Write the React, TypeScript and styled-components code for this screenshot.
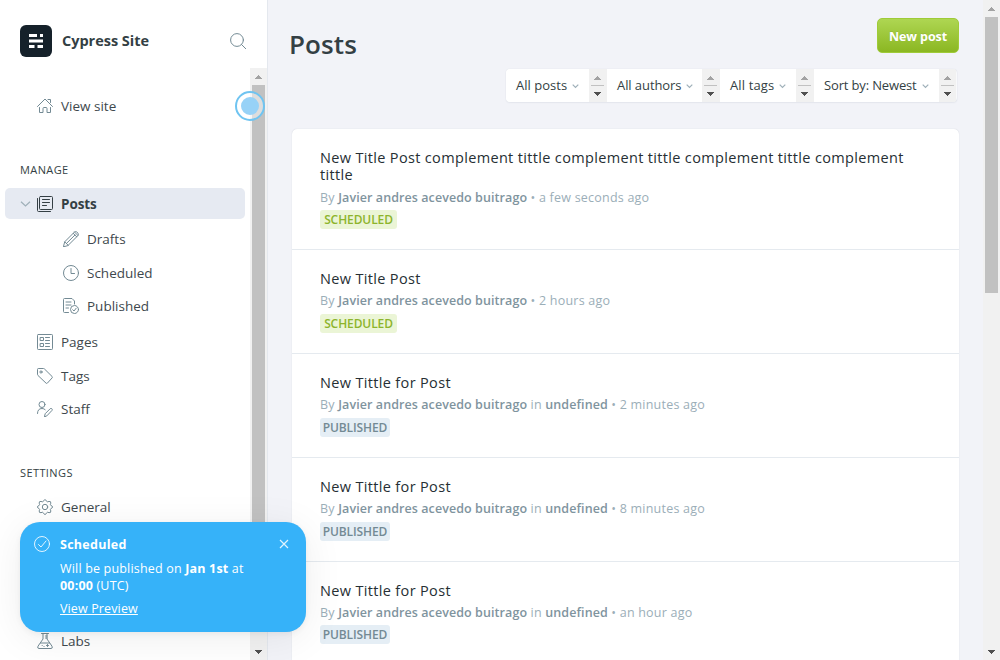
import React from "react";
import styled, { createGlobalStyle, css } from "styled-components";

const GlobalStyle = createGlobalStyle`
  * { box-sizing: border-box; }
  html, body { margin: 0; padding: 0; height: 100%; overflow: hidden; }
  body {
    font-family: "Open Sans", "Noto Sans", sans-serif;
    color: #343f44;
    background: #f2f3f8;
  }
`;

const Page = styled.div`
  display: flex;
  width: 1000px;
  height: 660px;
  overflow: hidden;
  position: relative;
`;

/* ---------- scrollbars ---------- */

const Track = styled.div`
  flex: none;
  display: flex;
  flex-direction: column;
  width: 17px;
  height: 100%;
  background: #f1f1f1;
`;
const ArrowBox = styled.div<{ $h?: number }>`
  flex: none;
  display: flex;
  justify-content: center;
  align-items: center;
  height: ${(p) => p.$h ?? 17}px;
`;
const ThumbLane = styled.div`
  flex: 1;
  padding: 0 2px;
`;
const Thumb = styled.div<{ $h: string }>`
  height: ${(p) => p.$h};
  background: #c1c1c1;
`;

const Arrow = ({ down, color }: { down?: boolean; color: string }) => (
  <svg width="7" height="4" viewBox="0 0 7 4" shapeRendering="crispEdges" fill={color}>
    <path d={down ? "M0 0h7v1h-1v1h-1v1h-1v1h-1v-1h-1v-1h-1v-1h-1z" : "M3 0h1v1h1v1h1v1h1v1h-7v-1h1v-1h1v-1h1z"} />
  </svg>
);

const Scrollbar = ({ thumb }: { thumb: string }) => (
  <Track>
    <ArrowBox><Arrow color="#a3a3a3" /></ArrowBox>
    <ThumbLane><Thumb $h={thumb} /></ThumbLane>
    <ArrowBox><Arrow down color="#505050" /></ArrowBox>
  </Track>
);

/* ---------- sidebar ---------- */

const Sidebar = styled.aside`
  flex: none;
  display: flex;
  flex-direction: column;
  width: 268px;
  background: #fff;
  border-right: 1px solid #e4e8ee;
`;
const SiteHeader = styled.header`
  flex: none;
  display: flex;
  align-items: center;
  height: 68px;
  padding: 14px 21px 0 20px;
`;
const Logo = styled.div`
  display: flex;
  align-items: center;
  justify-content: center;
  width: 32px;
  height: 32px;
  border-radius: 6px;
  background: #15212a;
`;
const SiteName = styled.div`
  flex: 1;
  margin-left: 10px;
  font-size: 14.5px;
  font-weight: 700;
  line-height: 20px;
  letter-spacing: -0.02px;
`;
const SidebarBody = styled.div`
  flex: 1;
  display: flex;
  min-height: 0;
`;
const Nav = styled.nav`
  flex: 1;
  padding: 22px 5px 0;
  overflow: hidden;
`;
const Group = styled.div<{ $gap: number }>`
  display: flex;
  flex-direction: column;
  margin-top: ${(p) => p.$gap}px;
`;
const GroupLabel = styled.div`
  height: 16px;
  margin-bottom: 10px;
  padding-left: 15px;
  font-size: 11px;
  line-height: 16px;
  letter-spacing: 0.4px;
`;
const NavItem = styled.a<{ $active?: boolean; $nested?: boolean; $h: number; $top?: number }>`
  position: relative;
  display: flex;
  align-items: center;
  height: ${(p) => p.$h}px;
  margin-top: ${(p) => p.$top ?? 0}px;
  padding-left: ${(p) => (p.$nested ? 58 : 32)}px;
  font-size: 13.5px;
  letter-spacing: 0;
  border-radius: 5px;
  color: #3e484d;
  svg { flex: none; margin-right: 8px; }
  ${(p) =>
    p.$active &&
    css`
      padding-left: 15px;
      background: #e6eaf2;
      color: #343f44;
      font-weight: 700;
      letter-spacing: -0.1px;
    `}
`;

const line = { fill: "none", stroke: "#738a94", strokeWidth: 1, strokeLinecap: "round", strokeLinejoin: "round" } as const;
const Icon = ({ children, color = "#738a94", size = 16 }: { children: React.ReactNode; color?: string; size?: number }) => (
  <svg width={size} height={size} viewBox="0 0 16 16" {...line} stroke={color}>{children}</svg>
);

const HomeIcon = () => (
  <Icon>
    <path d="M.5 8.500 8 1l7.500 7.500M2.500 9.500v5h3.500v-4q0-1 1-1h2q1 0 1 1v4h3.500v-5M11 1.500h2.500v3" />
  </Icon>
);
const PostsIcon = () => (
  <Icon color="#343f44">
    <rect x="2.500" y=".5" width="13" height="13" rx="1" />
    <path d="M.5 2.500v12q0 1 1 1h12M5.500 3.500h7M5.500 6.500h7M5.500 9.500h4" />
  </Icon>
);
const PencilIcon = () => (
  <Icon>
    <path d="M.5 15.500l1.200-4.700L11.500 1q1.200-1 2.300 0l1.200 1.200q1 1.100 0 2.300L5.200 14.300zM1.700 10.800l3.500 3.500M10.200 2.300l3.500 3.500M11.500 1l3.500 3.500M3.400 12.500l8.500-8.400" />
  </Icon>
);
const ClockIcon = () => (
  <Icon>
    <circle cx="8" cy="8" r="7.500" />
    <path d="M8 3.500v5h3.500" />
  </Icon>
);
const PublishedIcon = () => (
  <Icon>
    <path d="M5.500 14.500h-4q-1 0-1-1v-12q0-1 1-1h7.500l2.500 2.500v3M3 4h5M3 7h5M3 10h2.500" />
    <circle cx="11.500" cy="11.500" r="4" />
    <path d="M9.700 11.700l1.300 1.300 2.200-2.800" />
  </Icon>
);
const PagesIcon = () => (
  <Icon>
    <rect x=".5" y=".5" width="15" height="15" rx=".8" />
    <path d="M3.500 3.500h3v3h-3zM3.500 9.500h3v3h-3zM8.500 3.500h4M8.500 6.500h4M8.500 9.500h4M8.500 12.500h4" />
  </Icon>
);
const TagIcon = () => (
  <Icon>
    <path d="M.5 1.200q0-.7.7-.7h5.300q.5 0 .9.400l7.700 7.600q.7.700 0 1.400l-4.700 5.200q-.7.700-1.400 0L.9 7.400q-.4-.4-.4-.9z" />
    <circle cx="4" cy="4" r="1.100" />
  </Icon>
);
const StaffIcon = () => (
  <Icon>
    <circle cx="5" cy="3.500" r="3" />
    <path d="M.5 12.500q0-5 4.500-5 2 0 3.200 1.200M7.500 15.500l.7-2.800 5-5q.8-.6 1.600 0 .9.900.2 1.700l-4.900 5.200z" />
  </Icon>
);
const GearIcon = () => (
  <Icon>
    <circle cx="8" cy="8" r="2.700" />
    <path d="M6.700 1.500q1.300-1.900 2.600 0l.5 1q.4.500 1.100.3l1.100-.4q2.100-.3 1.800 1.800l-.4 1q-.2.800.4 1.200l1 .4q1.600 1.200 0 2.400l-1 .5q-.6.400-.4 1.100l.4 1.100q.3 2.100-1.800 1.800l-1.100-.4q-.7-.2-1.100.4l-.5.900q-1.300 1.900-2.600 0l-.5-.9q-.4-.6-1.100-.4l-1.100.4q-2.100.3-1.800-1.800l.4-1.100q.2-.7-.4-1.100l-1-.5q-1.600-1.200 0-2.400l1-.4q.6-.4.4-1.200l-.4-1q-.3-2.100 1.800-1.800l1.100.4q.7.200 1.100-.3z" />
  </Icon>
);
const LabsIcon = () => (
  <Icon>
    <path d="M4.500.5h7M6 .5v5.500L1 13.200q-1 2.300 1 2.300h12q2 0 1-2.300L10 6V.5M3.500 10h9M10 3H8.500M10 5H8.500M10.500 11.500v2M9.500 12.500h2M5.200 12.500v.1M7 13.500v.1" />
  </Icon>
);
const SearchIcon = () => (
  <Icon>
    <circle cx="7" cy="7" r="6.400" />
    <path d="M11.500 11.500l4.200 4.200" />
  </Icon>
);
const Chevron = styled.svg`
  && { margin: 0 6px 0 0; }
`;

/* ---------- main ---------- */

const Main = styled.main`
  flex: 1;
  min-width: 0;
  padding: 18px 24px 0;
  overflow: hidden;
`;
const TitleBar = styled.div`
  display: flex;
  justify-content: space-between;
  height: 51px;
  margin-left: -3px;
`;
const Heading = styled.h1`
  margin: 8px 0 0;
  font-size: 26px;
  line-height: 36px;
  font-weight: 600;
  letter-spacing: 0.1px;
`;
const NewPost = styled.button`
  width: 82px;
  height: 35px;
  padding: 2px 0 0;
  border: 1px solid #9fcb38;
  border-radius: 5px;
  background: linear-gradient(#aed652, #8bb722);
  color: #fff;
  font: 700 12.5px/31px "Open Sans", sans-serif;
  letter-spacing: -0.1px;
  text-shadow: 0 -1px 0 rgba(0, 0, 0, 0.08);
`;
const Filters = styled.div`
  display: flex;
  width: 451px;
  height: 33px;
  margin-left: auto;
  margin-right: 2px;
  border-radius: 4px;
  background: #f8f9fb;
  box-shadow: 0 0 1px rgba(60, 80, 100, 0.2), 0 1px 2px rgba(60, 80, 100, 0.06);
  overflow: hidden;
`;
const Filter = styled.div<{ $w: number; $ls: number }>`
  flex: none;
  display: flex;
  align-items: center;
  width: ${(p) => p.$w}px;
  padding: 0 0 2px 10px;
  background: #fff;
  font-size: 13px;
  letter-spacing: ${(p) => p.$ls}px;
  white-space: nowrap;
  color: #343f44;
  svg { flex: none; margin: 3px 0 0 5px; }
`;
const Stepper = styled.div<{ $w: number }>`
  flex: none;
  display: flex;
  flex-direction: column;
  justify-content: center;
  width: ${(p) => p.$w}px;
  padding: 0 ${(p) => p.$w - 15}px 0 2px;
  background: #f1f1f1;
`;
const StepLine = styled.div`
  height: 1px;
  background: #c1c1c1;
`;
const List = styled.ol`
  width: 667px;
  margin: 27px 0 0;
  padding: 0;
  list-style: none;
  background: #fff;
  border-radius: 5px 5px 0 0;
  box-shadow: 0 0 1px rgba(60, 80, 100, 0.25);
`;
const Row = styled.li<{ $h: number }>`
  height: ${(p) => p.$h}px;
  padding: 20px 28px 0;
  border-bottom: 1px solid #e5eaef;
`;
const PostTitle = styled.h3`
  margin: 0;
  padding-right: 20px;
  font-size: 14.5px;
  line-height: 17px;
  font-weight: 500;
  letter-spacing: 0.34px;
  color: #262f34;
`;
const Meta = styled.p<{ $lead: number; $tail: number }>`
  margin: ${(p) => p.$lead}px 0 ${(p) => p.$tail}px;
  font-size: 12.5px;
  line-height: 18px;
  letter-spacing: 0.22px;
  color: #9baeb8;
  b { font-weight: 600; letter-spacing: 0.08px; color: #7f949e; }
`;
const Badge = styled.span<{ $scheduled: boolean }>`
  display: block;
  width: ${(p) => (p.$scheduled ? 77 : 70)}px;
  height: 19px;
  border-radius: 3px;
  text-align: center;
  font-size: 12px;
  line-height: 19px;
  font-weight: 600;
  letter-spacing: -0.1px;
  color: ${(p) => (p.$scheduled ? "#8db42c" : "#738a94")};
  background: ${(p) => (p.$scheduled ? "#ebf5d6" : "#e5eef5")};
`;

/* ---------- overlays ---------- */

const Toast = styled.div`
  position: absolute;
  left: 20px;
  top: 522px;
  display: flex;
  width: 286px;
  height: 110px;
  padding: 14px 17px 0 14px;
  border-radius: 20px;
  background: #36b2f9;
  color: #fff;
  font-size: 12.5px;
  line-height: 17px;
  letter-spacing: 0.18px;
  box-shadow: 0 0 1px rgba(0, 0, 0, 0.06), 0 2px 6px rgba(0, 0, 0, 0.05), 0 6px 40px rgba(0, 0, 0, 0.07);
  svg { flex: none; }
`;
const ToastText = styled.div`
  flex: 1;
  margin-left: 10px;
`;
const ToastTitle = styled.div`
  font-weight: 700;
  letter-spacing: 0.28px;
`;
const ToastBody = styled.div`
  margin: 7px 0 6px;
  white-space: nowrap;
`;
const ToastLink = styled.a`
  text-decoration: underline;
  letter-spacing: 0.13px;
`;
const Pulse = styled.div`
  position: absolute;
  left: 235px;
  top: 91px;
  display: flex;
  align-items: center;
  justify-content: center;
  width: 30px;
  height: 30px;
  border: 2px solid #6fc4f1;
  border-radius: 50%;
  background: rgba(255, 255, 255, 0.45);
`;
const PulseDot = styled.div`
  width: 18px;
  height: 18px;
  border-radius: 50%;
  background: #97d2f7;
`;

const filters = [
  { label: "All posts", w: 83, s: 18, ls: 0.02 },
  { label: "All authors", w: 95, s: 18, ls: -0.08 },
  { label: "All tags", w: 76, s: 18, ls: 0.12 },
  { label: "Sort by: Newest", w: 125, s: 17, ls: -0.15 },
];

const posts = [
  { title: "New Title Post complement tittle complement tittle complement tittle complement tittle", time: "a few seconds ago", scheduled: true, h: 121, lead: 6, tail: 3 },
  { title: "New Title Post", time: "2 hours ago", scheduled: true, h: 104, lead: 5, tail: 4 },
  { title: "New Tittle for Post", time: "2 minutes ago", scheduled: false, h: 104, lead: 5, tail: 4 },
  { title: "New Tittle for Post", time: "8 minutes ago", scheduled: false, h: 104, lead: 5, tail: 4 },
  { title: "New Tittle for Post", time: "an hour ago", scheduled: false, h: 104, lead: 5, tail: 3 },
];

export default function App() {
  return (
    <>
      <GlobalStyle />
      <Page>
        <Sidebar>
          <SiteHeader>
            <Logo>
              <svg width="14" height="14" viewBox="0 0 14 14" fill="#fff">
                <path d="M0 0h8v3H0zM11 0h3v3h-3zM0 5.500h14v3H0zM0 11h5.500v3H0zM8.500 11H14v3H8.500z" />
              </svg>
            </Logo>
            <SiteName>Cypress Site</SiteName>
            <SearchIcon />
          </SiteHeader>
          <SidebarBody>
            <Nav>
              <NavItem $h={31}><HomeIcon />View site</NavItem>
              <Group $gap={41}>
                <GroupLabel>MANAGE</GroupLabel>
                <NavItem $active $h={31}>
                  <Chevron width="11" height="6" viewBox="0 0 11 6" fill="none" stroke="#9fb0b9" strokeWidth="1.2">
                    <path d="M1 .7l4.500 4.300L10 .7" />
                  </Chevron>
                  <PostsIcon />Posts
                </NavItem>
                <NavItem $nested $h={34} $top={3}><PencilIcon />Drafts</NavItem>
                <NavItem $nested $h={33}><ClockIcon />Scheduled</NavItem>
                <NavItem $nested $h={34}><PublishedIcon />Published</NavItem>
                <NavItem $h={34} $top={2}><PagesIcon />Pages</NavItem>
                <NavItem $h={33}><TagIcon />Tags</NavItem>
                <NavItem $h={34}><StaffIcon />Staff</NavItem>
              </Group>
              <Group $gap={39}>
                <GroupLabel>SETTINGS</GroupLabel>
                <NavItem $h={32}><GearIcon />General</NavItem>
                <NavItem $h={34} $top={101}><LabsIcon />Labs</NavItem>
              </Group>
            </Nav>
            <Scrollbar thumb="96%" />
          </SidebarBody>
        </Sidebar>
        <Main>
          <TitleBar>
            <Heading>Posts</Heading>
            <NewPost>New post</NewPost>
          </TitleBar>
          <Filters>
            {filters.map((f) => (
              <React.Fragment key={f.label}>
                <Filter $w={f.w} $ls={f.ls}>
                  {f.label}
                  <svg width="7" height="5" viewBox="0 0 7 5" fill="none" stroke="#9fb0b9" strokeWidth="1.2">
                    <path d="M.7.7l2.800 2.800L6.300.7" />
                  </svg>
                </Filter>
                <Stepper $w={f.s}>
                  <ArrowBox $h={15}><Arrow color="#a3a3a3" /></ArrowBox>
                  <StepLine />
                  <ArrowBox $h={15}><Arrow down color="#505050" /></ArrowBox>
                </Stepper>
              </React.Fragment>
            ))}
          </Filters>
          <List>
            {posts.map((p, i) => (
              <Row key={i} $h={p.h}>
                <PostTitle>{p.title}</PostTitle>
                <Meta $lead={p.lead} $tail={p.tail}>
                  By <b>Javier andres acevedo buitrago</b>
                  {!p.scheduled && <> in <b>undefined</b></>} • {p.time}
                </Meta>
                <Badge $scheduled={p.scheduled}>{p.scheduled ? "SCHEDULED" : "PUBLISHED"}</Badge>
              </Row>
            ))}
          </List>
        </Main>
        <Scrollbar thumb="276px" />
        <Pulse><PulseDot /></Pulse>
        <Toast>
          <svg width="16" height="16" viewBox="0 0 16 16" fill="none" stroke="#fff" strokeOpacity=".85" strokeLinecap="round" strokeLinejoin="round">
            <circle cx="8" cy="8" r="7.500" />
            <path d="M4.500 8.500l2.500 2.500 5-6" />
          </svg>
          <ToastText>
            <ToastTitle>Scheduled</ToastTitle>
            <ToastBody>
              Will be published on <b>Jan 1st</b> at<br /><b>00:00</b> (UTC)
            </ToastBody>
            <ToastLink>View Preview</ToastLink>
          </ToastText>
          <svg width="10" height="16" viewBox="0 0 10 16" fill="none" stroke="#fff" strokeOpacity=".85" strokeWidth="1.2">
            <path d="M1 4l8 8M9 4l-8 8" />
          </svg>
        </Toast>
      </Page>
    </>
  );
}
